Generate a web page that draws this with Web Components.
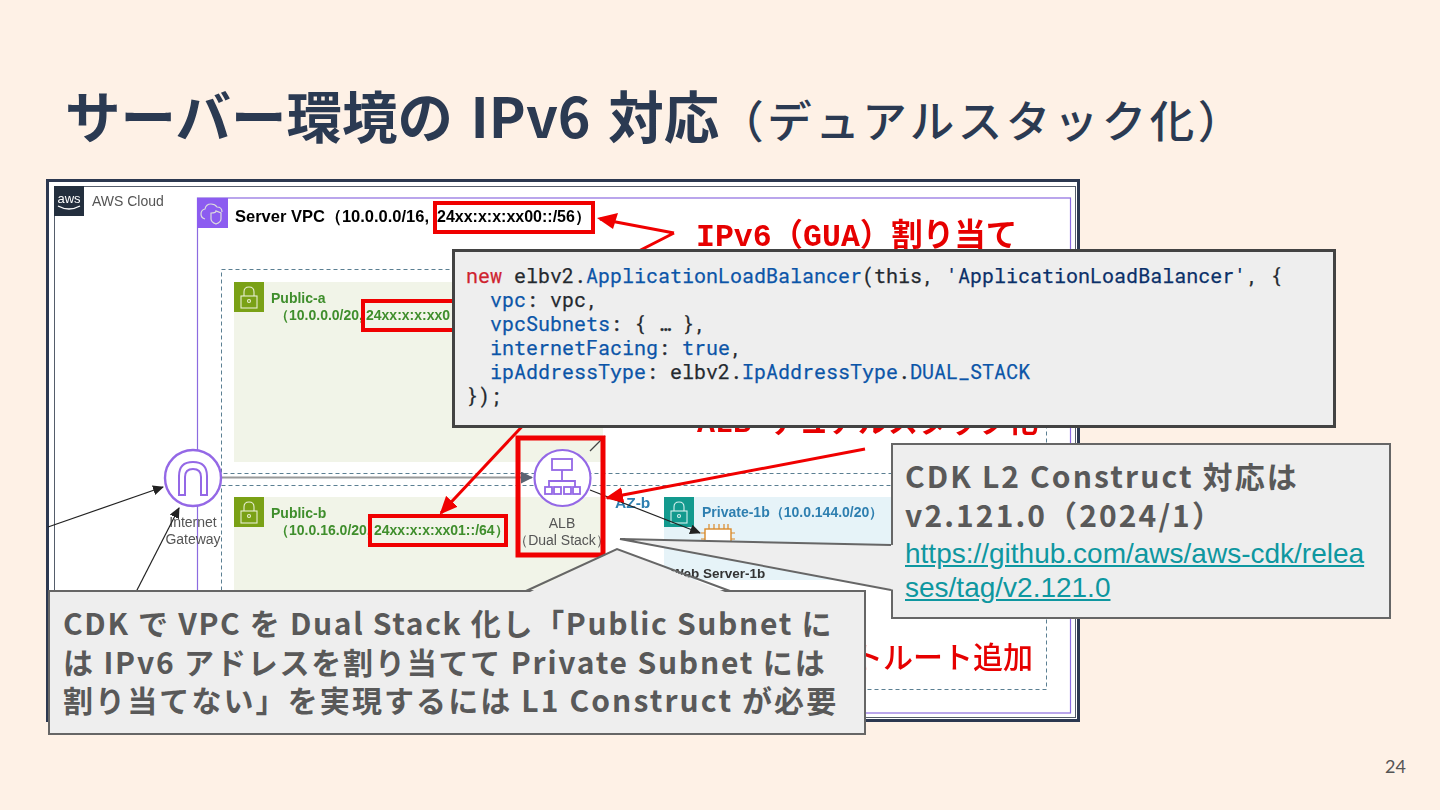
<!DOCTYPE html>
<html lang="ja">
<head>
<meta charset="utf-8">
<title>サーバー環境の IPv6 対応</title>
<style>
  html, body { margin: 0; background: #fef1e6; }
</style>
</head>
<body>
<slide-page>
  <slide-title slot="title">サーバー環境の IPv6 対応<small>（デュアルスタック化）</small></slide-title>
  <aws-diagram></aws-diagram>
  <code-panel></code-panel>
  <note-callout style="left:891px;top:443px;width:500px;height:176px;padding:11px 12px" tail="0,102 -271,96 0,147">
    <strong style="letter-spacing:2.1px">CDK L2 Construct 対応は<br>v2.121.0（2024/1）</strong>
    <a href="#">https://github.com/aws/aws-cdk/relea<br>ses/tag/v2.121.0</a>
  </note-callout>
  <note-callout style="left:48px;top:590px;width:818px;height:145px;padding:11px 13px" tail="478,1 569,-41 682,1">
    <strong><span style="letter-spacing:1.65px">CDK で VPC を Dual Stack 化し「Public Subnet に</span><br><span style="letter-spacing:1.8px">は IPv6 アドレスを割り当てて Private Subnet には</span><br><span style="letter-spacing:2.1px">割り当てない」を実現するには L1 Construct が必要</span></strong>
  </note-callout>
  <page-number>24</page-number>
</slide-page>

<script>
const SANS = '"Noto Sans CJK JP", "Noto Sans", sans-serif';

class SlidePage extends HTMLElement {
    constructor() {
        super();
        this.attachShadow({ mode: "open" });
        this.shadowRoot.innerHTML = `
            <style>
                :host {
                    display: flex;
                    flex-direction: column;
                    position: relative;
                    width: 1440px;
                    height: 810px;
                    overflow: hidden;
                    padding: 74px 0 0 46px;
                    box-sizing: border-box;
                }
            </style>
            <slot name="title"></slot>
            <slot></slot>
        `;
    }
}

class SlideTitle extends HTMLElement {
    constructor() {
        super();
        this.attachShadow({ mode: "open" });
        this.shadowRoot.innerHTML = `
            <style>
                :host {
                    display: block;
                    height: 105px;
                    padding-left: 19px;
                    font: 700 55.5px/80px ${SANS};
                    word-spacing: 5px;
                    color: #2b3a52;
                    white-space: nowrap;
                }
                ::slotted(small) {
                    font-size: 44.5px;
                    font-weight: 500;
                    letter-spacing: 3.5px;
                }
            </style>
            <slot></slot>
        `;
    }
}

// the pasted architecture picture; svg coords are page coords
class AwsDiagram extends HTMLElement {
    constructor() {
        super();
        this.attachShadow({ mode: "open" });
        this.shadowRoot.innerHTML = `
            <style>
                :host { display: block; width: 1034px; height: 543px; }
                svg { display: block; filter: blur(.35px); }
                text { font-family: "Liberation Sans", sans-serif; font-size: 14px; }
                .b { font-weight: 700; }
                .green { fill: #3f8e2c; font-weight: 700; }
                .blue { fill: #2e7fb0; font-weight: 700; }
                .gray { fill: #555; }
                .red { fill: #e60000; font-size: 30px; font-weight: 700; font-family: "Liberation Mono", "Noto Sans CJK JP", monospace; }
                .redj { fill: #e60000; font-size: 30px; font-weight: 500; font-family: "Noto Sans CJK JP", sans-serif; }
                .rbox { fill: none; stroke: #f00000; stroke-width: 4; }
            </style>
            <svg width="1034" height="543" viewBox="46 179 1034 543">
                <defs>
                    <marker id="ah" markerWidth="11" markerHeight="10" refX="10" refY="5" orient="auto" markerUnits="userSpaceOnUse"><path d="M0 0L11 5L0 10z" fill="#222"/></marker>
                    <marker id="ag" markerWidth="12" markerHeight="12" refX="11" refY="6" orient="auto" markerUnits="userSpaceOnUse"><path d="M0 0L12 6L0 12z" fill="#5a6472"/></marker>
                    <marker id="ar" markerWidth="18" markerHeight="16" refX="16" refY="8" orient="auto" markerUnits="userSpaceOnUse"><path d="M0 0L18 8L0 16z" fill="#f00000"/></marker>
                </defs>
                <rect x="47.5" y="180.5" width="1031" height="540" fill="#fff" stroke="#2c3850" stroke-width="3"/>
                <rect x="54.5" y="186.5" width="1021" height="531" fill="none" stroke="#555d6b"/>

                <rect x="54" y="186" width="30" height="30" fill="#232f3e"/>
                <text x="69" y="203" text-anchor="middle" fill="#fff" style="font-size:13px">aws</text>
                <path d="M58 206q11 6 22 0" fill="none" stroke="#fff" stroke-width="1.4"/>
                <text x="92" y="206" class="gray">AWS Cloud</text>

                <rect x="197.5" y="198" width="873" height="515" fill="none" stroke="#8c6be0" stroke-width="1.2"/>
                <rect x="197" y="198" width="31" height="30" fill="#8c5cf0"/>
                <path d="M205 219q-4-1-4-5q0-4 4-5q1-5 6-5q4 0 6 3q5 0 5 5" fill="none" stroke="#ddd" stroke-width="1.2"/>
                <path d="M211 213q5 0 5-2q5 2 5 2v6q0 3-5 5q-5-2-5-5z" fill="none" stroke="#ddd" stroke-width="1.2"/>
                <text x="235" y="222" class="b" style="font-size:16.500px">Server VPC（10.0.0.0/16,</text>
                <text x="437" y="222" class="b" style="font-size:16px">24xx:x:x:xx00::/56）</text>

                <rect x="221.500" y="269.500" width="825" height="204" fill="none" stroke="#5b7f92" stroke-dasharray="4 3"/>
                <rect x="221.500" y="485.500" width="825" height="204" fill="none" stroke="#5b7f92" stroke-dasharray="4 3"/>
                <rect x="234" y="282" width="369" height="180" fill="#f1f4e8"/>
                <rect x="234" y="497" width="369" height="120" fill="#f1f4e8"/>
                <rect x="664" y="497" width="240" height="83" fill="#e6f3f8"/>
                <line x1="222" y1="477.500" x2="532" y2="477.500" stroke="#999" stroke-width="2" marker-end="url(#ag)"/>

                <g fill="none" stroke="#e8efd2" stroke-width="1.1">
                    <rect x="234" y="282" width="30" height="30" fill="#7aa116" stroke="none"/>
                    <rect x="241" y="296" width="16" height="12"/><path d="M244 296v-4q0-5 5-5q5 0 5 5v4"/><circle cx="249" cy="301" r="1.500"/>
                    <rect x="234" y="497" width="30" height="30" fill="#7aa116" stroke="none"/>
                    <rect x="241" y="511" width="16" height="12"/><path d="M244 511v-4q0-5 5-5q5 0 5 5v4"/><circle cx="249" cy="516" r="1.500"/>
                </g>
                <g fill="none" stroke="#d5f0ee" stroke-width="1.1">
                    <rect x="664" y="497" width="30" height="30" fill="#139a8e" stroke="none"/>
                    <rect x="671" y="511" width="16" height="12"/><path d="M674 511v-4q0-5 5-5q5 0 5 5v4"/><circle cx="679" cy="516" r="1.500"/>
                </g>

                <text x="271" y="303" class="green">Public-a</text>
                <text x="275" y="320" class="green">（10.0.0.0/20,</text>
                <text x="366" y="320" class="green">24xx:x:x:xx0</text>
                <text x="271" y="518" class="green">Public-b</text>
                <text x="275" y="535" class="green">（10.0.16.0/20,</text>
                <text x="374" y="535" class="green">24xx:x:x:xx01::/64）</text>

                <circle cx="193" cy="478" r="28" fill="#fff" stroke="#9468e6" stroke-width="2.400"/>
                <path d="M179 495V476Q179 462 193 462Q207 462 207 476V495H201V477Q201 469 193 469Q185 469 185 477V495Z" fill="none" stroke="#9468e6" stroke-width="2"/>
                <text x="193" y="527" text-anchor="middle" class="gray">Internet</text>
                <text x="193" y="544" text-anchor="middle" class="gray">Gateway</text>
                <line x1="48" y1="527" x2="163" y2="487" stroke="#222" stroke-width="1.2" marker-end="url(#ah)"/>
                <line x1="136" y1="592" x2="179" y2="508" stroke="#222" stroke-width="1.2" marker-end="url(#ah)"/>

                <circle cx="562.500" cy="478" r="28" fill="#fff" stroke="#9468e6" stroke-width="2.200"/>
                <g fill="none" stroke="#9468e6" stroke-width="1.800">
                    <rect x="552" y="459" width="20" height="11"/>
                    <path d="M562 470v5M549 487v-6h26v6M549 481h26M562 475v6"/>
                    <rect x="545" y="487" width="7" height="7"/><rect x="554" y="487" width="7" height="7"/>
                    <rect x="564" y="487" width="7" height="7"/><rect x="573" y="487" width="7" height="7"/>
                </g>
                <text x="562" y="528" text-anchor="middle" class="gray">ALB</text>
                <text x="562" y="545" text-anchor="middle" class="gray">（Dual Stack）</text>
                <line x1="590" y1="451" x2="605" y2="436" stroke="#444" stroke-width="1.200"/>

                <text x="615" y="508" class="blue" style="font-size:15.500px">AZ-b</text>
                <text x="702" y="517" class="blue">Private-1b（10.0.144.0/20）</text>
                <rect x="705" y="529" width="26" height="18" fill="#fff" stroke="#d98a2b" stroke-width="1.400"/>
                <path d="M709 529v-5M714 529v-5M719 529v-5M724 529v-5M728 529v-5M705 533h-4M705 539h-4M731 533h4M731 539h4" stroke="#d98a2b" stroke-width="1.200"/>
                <line x1="590" y1="490" x2="700" y2="533" stroke="#222" stroke-width="1.200" marker-end="url(#ah)"/>
                <text x="671" y="578" class="b" style="font-size:13.500px" fill="#333">Web Server-1b</text>

                <rect x="363" y="301" width="140" height="29" class="rbox"/>
                <rect x="435" y="203" width="158" height="29" class="rbox"/>
                <rect x="370" y="516" width="136" height="29" class="rbox"/>
                <rect x="518" y="438" width="85" height="117" class="rbox" style="stroke-width:5"/>

                <text x="696" y="246" class="red" style="font-size:31.500px">IPv6（GUA）割り当て</text>
                <path d="M674 233L600 219M674 233L625 258" fill="none" stroke="#f00000" stroke-width="3"/>
                <path d="M597 218L618 213L613 229z" fill="#f00000"/>
                <text x="697" y="432" class="red">ALB デュアルスタック化</text>
                <line x1="530" y1="418" x2="441" y2="513" stroke="#f00000" stroke-width="3" marker-end="url(#ar)"/>
                <line x1="865" y1="449" x2="607" y2="498" stroke="#f00000" stroke-width="3" marker-end="url(#ar)"/>
                <text x="1033" y="668" text-anchor="end" class="redj">トルート追加</text>
            </svg>
        `;
    }
}

class CodePanel extends HTMLElement {
    constructor() {
        super();
        this.attachShadow({ mode: "open" });
        this.shadowRoot.innerHTML = `
            <style>
                :host {
                    display: block;
                    position: absolute;
                    left: 452px;
                    top: 249px;
                    width: 884px;
                    height: 179px;
                    box-sizing: border-box;
                    border: 3px solid #434343;
                    background: #eee;
                    padding: 11px 11px;
                }
                pre {
                    margin: 0;
                    font: 400 20px/24px "Roboto Mono", "Liberation Mono", monospace;
                    color: #24292f;
                    -webkit-text-stroke: .25px currentColor;
                }
                .k { color: #cf222e; }
                .f { color: #0b55a8; }
                .s { color: #0a3069; }
            </style>
            <pre><span class="k">new</span> elbv2.<span class="f">ApplicationLoadBalancer</span>(this, <span class="s">'ApplicationLoadBalancer'</span>, {
  <span class="f">vpc</span>: vpc,
  <span class="f">vpcSubnets</span>: { … },
  <span class="f">internetFacing</span>: <span class="f">true</span>,
  <span class="f">ipAddressType</span>: elbv2.<span class="f">IpAddressType</span>.<span class="f">DUAL_STACK</span>
});</pre>
        `;
    }
}

class NoteCallout extends HTMLElement {
    constructor() {
        super();
        this.attachShadow({ mode: "open" });
        this.shadowRoot.innerHTML = `
            <style>
                :host {
                    display: block;
                    position: absolute;
                    box-sizing: border-box;
                    border: 2px solid #666;
                    background: #eee;
                    color: #595959;
                    white-space: nowrap;
                }
                svg { position: absolute; left: -2px; top: -2px; width: 1px; height: 1px; overflow: visible; }
                .body { position: relative; }
                ::slotted(strong) {
                    display: block;
                    font: 700 30px/38.500px ${SANS};
                }
                ::slotted(a) {
                    display: block;
                    margin-top: 4px;
                    font: 400 28px/34px "Liberation Sans", sans-serif;
                    color: #0e97a0;
                    text-decoration: underline;
                }
            </style>
            <svg><polygon fill="#eee"/><polyline fill="none" stroke="#666" stroke-width="2"/></svg>
            <div class="body"><slot></slot></div>
        `;
    }

    connectedCallback() {
        const tail = this.getAttribute("tail");
        const pts = tail.split(" ").map((p) => p.split(",").map(Number));
        // fill reaches a little inside the box so the border under the tail goes away
        const inner = pts[0][0] === 0
            ? pts.map((p, i) => (i === 1 ? p : [4, p[1]]))
            : pts.map((p, i) => (i === 1 ? p : [p[0], 4]));
        this.shadowRoot.querySelector("polygon").setAttribute("points", inner.map((p) => p.join(",")).join(" "));
        this.shadowRoot.querySelector("polyline").setAttribute("points", tail);
    }
}

class PageNumber extends HTMLElement {
    constructor() {
        super();
        this.attachShadow({ mode: "open" });
        this.shadowRoot.innerHTML = `
            <style>
                :host {
                    display: block;
                    position: absolute;
                    right: 34px;
                    bottom: 32px;
                    font: 400 18px/24px Lato, sans-serif;
                    color: #555;
                }
            </style>
            <slot></slot>
        `;
    }
}

customElements.define("slide-page", SlidePage);
customElements.define("slide-title", SlideTitle);
customElements.define("aws-diagram", AwsDiagram);
customElements.define("code-panel", CodePanel);
customElements.define("note-callout", NoteCallout);
customElements.define("page-number", PageNumber);
</script>
</body>
</html>
